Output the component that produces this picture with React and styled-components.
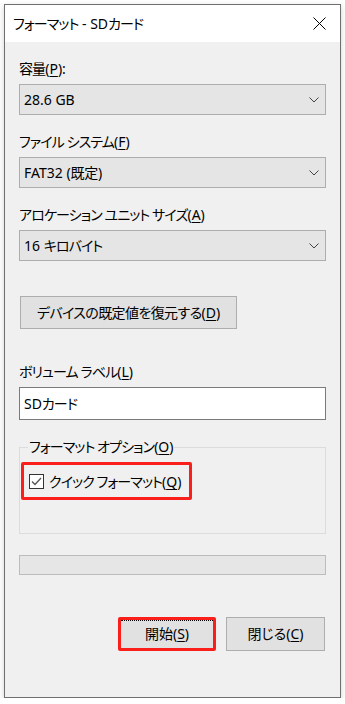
import React from 'react';
import styled, { createGlobalStyle } from 'styled-components';

const GlobalStyle = createGlobalStyle`
    html, body {
        margin: 0;
        padding: 0;
        background: #ffffff;
    }
    body {
        font-family: "Noto Sans", "Noto Sans CJK JP", sans-serif;
        font-size: 14px;
        color: #000000;
        font-feature-settings: "palt";
    }
`;

const Window = styled.div`
    margin: 4px 0 0 4px;
    width: 337px;
    height: 694px;
    box-sizing: border-box;
    border: 1px solid #6f6f6f;
    background: #f0f0f0;
    box-shadow: 0 2px 6px rgba(0, 0, 0, 0.18);
    display: flex;
    flex-direction: column;
`;

const TitleBar = styled.div`
    height: 37px;
    background: #ffffff;
    display: flex;
    align-items: center;
    justify-content: space-between;
    padding: 0 14px 0 8px;
`;

const Title = styled.span`
    font-size: 14px;
    line-height: 20px;
`;

// kana in Yu Gothic UI run narrower than Noto, so tighten Japanese runs
const Jp = styled.span`
    letter-spacing: ${(p) => p.ls ?? -0.9}px;
`;

const Body = styled.div`
    flex: 1;
    padding: 17px 14px 0 14px;
    display: flex;
    flex-direction: column;
`;

const Label = styled.div`
    line-height: 20px;
    height: 20px;
    margin-top: ${(p) => p.gap || 0}px;
    margin-bottom: 5px;
    white-space: nowrap;
`;

const Key = styled.span`
    text-decoration: underline;
    text-underline-offset: 2px;
`;

const Combo = styled.div`
    height: 31px;
    box-sizing: border-box;
    background: #e5e5e5;
    border: 1px solid #adadad;
    display: flex;
    align-items: center;
    justify-content: space-between;
    padding: 0 6px 0 4px;
    line-height: 20px;
`;

const Button = styled.div`
    height: ${(p) => p.h || 34}px;
    width: ${(p) => p.w}px;
    box-sizing: border-box;
    background: #e1e1e1;
    border: ${(p) => (p.highlight ? '3px solid #fa1f1a' : '1px solid #adadad')};
    border-radius: ${(p) => (p.highlight ? '2px' : '0')};
    display: flex;
    align-items: center;
    justify-content: center;
    line-height: 20px;
    white-space: nowrap;
    position: relative;
`;

const FocusLine = styled.div`
    position: absolute;
    left: 0;
    right: 0;
    top: 0;
    border-top: 1px dotted #000;
`;

const RestoreRow = styled.div`
    margin-top: 35px;
    padding-left: 1px;
    display: flex;
`;

const TextBox = styled.div`
    height: 33px;
    box-sizing: border-box;
    background: #ffffff;
    border: 1px solid #7a7a7a;
    display: flex;
    align-items: center;
    padding-left: 4px;
    line-height: 20px;
`;

const Group = styled.fieldset`
    margin: 17px 0 0 0;
    padding: 0 0 33px 1px;
    border: 1px solid #dcdcdc;
    min-width: 0;
`;

const Legend = styled.legend`
    margin-left: 7px;
    padding: 0 1px;
    line-height: 20px;
`;

const CheckRow = styled.div`
    margin-top: 5px;
    height: 38px;
    box-sizing: border-box;
    display: inline-flex;
    align-items: center;
    gap: 5px;
    padding: 0 8px 0 5px;
    border: 3px solid #fa1f1a;
    border-radius: 2px;
`;

const CheckBox = styled.div`
    width: 15px;
    height: 15px;
    box-sizing: border-box;
    border: 1px solid #333333;
    background: #ffffff;
    display: flex;
    align-items: center;
    justify-content: center;
`;

const Progress = styled.div`
    margin-top: 21px;
    height: 20px;
    box-sizing: border-box;
    background: #e6e6e6;
    border: 1px solid #bcbcbc;
`;

const ButtonRow = styled.div`
    margin-top: 42px;
    display: flex;
    justify-content: flex-end;
    gap: 10px;
    padding-right: 1px;
`;

const Chevron = () => (
    <svg width="10" height="6" viewBox="0 0 10 6">
        <path d="M0.5 0.5 L5 5 L9.5 0.5" fill="none" stroke="#444" strokeWidth="1" />
    </svg>
);

const Close = () => (
    <svg width="13" height="13" viewBox="0 0 13 13">
        <path d="M0.5 0.5 L12.5 12.5 M12.5 0.5 L0.5 12.5" fill="none" stroke="#000" strokeWidth="1" />
    </svg>
);

const Check = () => (
    <svg width="11" height="9" viewBox="0 0 11 9">
        <path d="M1 4.5 L4 7.5 L10 1" fill="none" stroke="#555" strokeWidth="1.3" />
    </svg>
);

const Field = ({ label, hotkey, suffix = '', gap, children }) => (
    <>
        <Label gap={gap}>
            <Jp>{label}</Jp>(<Key>{hotkey}</Key>){suffix}
        </Label>
        {children}
    </>
);

export default function App() {
    return (
        <>
            <GlobalStyle />
            <Window>
                <TitleBar>
                    <Title><Jp>フォーマット</Jp> - SD<Jp>カード</Jp></Title>
                    <Close />
                </TitleBar>
                <Body>
                    <Field label="容量" hotkey="P" suffix=":">
                        <Combo>28.6 GB<Chevron /></Combo>
                    </Field>
                    <Field label="ファイル システム" hotkey="F" gap={17}>
                        <Combo><span>FAT32 (<Jp ls={-0.3}>既定</Jp>)</span><Chevron /></Combo>
                    </Field>
                    <Field label="アロケーション ユニット サイズ" hotkey="A" gap={17}>
                        <Combo><span>16 <Jp>キロバイト</Jp></span><Chevron /></Combo>
                    </Field>
                    <RestoreRow>
                        <Button w={217} h={33}>
                            <Jp ls={-0.6}>デバイスの既定値を復元する</Jp>(<Key>D</Key>)
                        </Button>
                    </RestoreRow>
                    <Field label="ボリューム ラベル" hotkey="L" gap={33}>
                        <TextBox>SD<Jp>カード</Jp></TextBox>
                    </Field>
                    <Group>
                        <Legend>
                            <Jp>フォーマット オプション</Jp>(<Key>O</Key>)
                        </Legend>
                        <div>
                            <CheckRow>
                                <CheckBox><Check /></CheckBox>
                                <span><Jp>クイック フォーマット</Jp>(<Key>Q</Key>)</span>
                            </CheckRow>
                        </div>
                    </Group>
                    <Progress />
                    <ButtonRow>
                        <Button w={98} highlight>
                            <FocusLine />
                            <Jp ls={0}>開始</Jp>(<Key>S</Key>)
                        </Button>
                        <Button w={99}>
                            <Jp ls={0}>閉じる</Jp>(<Key>C</Key>)
                        </Button>
                    </ButtonRow>
                </Body>
            </Window>
        </>
    );
}
